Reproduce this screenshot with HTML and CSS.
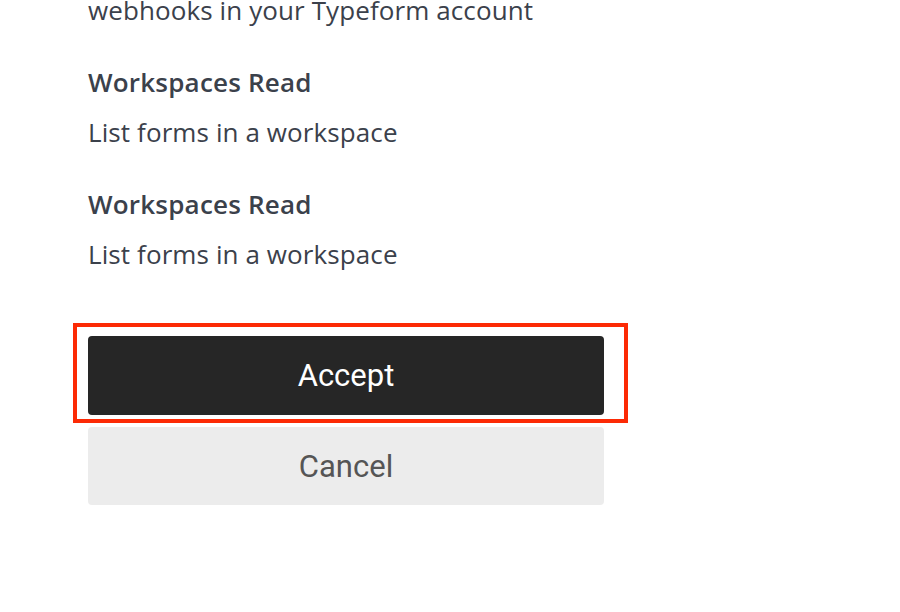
FILE: index.html
```html
<!DOCTYPE html>
<html lang="en">
<head>
<meta charset="utf-8">
<title>Authorize</title>
<link rel="stylesheet" href="styles.css">
</head>
<body>
  <main class="consent">
    <p class="scope-desc">webhooks in your Typeform account</p>
    <section class="scope">
      <h3 class="scope-title">Workspaces Read</h3>
      <p class="scope-desc">List forms in a workspace</p>
    </section>
    <section class="scope">
      <h3 class="scope-title">Workspaces Read</h3>
      <p class="scope-desc">List forms in a workspace</p>
    </section>
    <div class="actions">
      <div class="accept-wrap">
        <button class="btn btn-accept" type="button">Accept</button>
        <span class="highlight" aria-hidden="true"></span>
      </div>
      <button class="btn btn-cancel" type="button">Cancel</button>
    </div>
  </main>
</body>
</html>
```
FILE: styles.css
```css
html, body {
  margin: 0;
  padding: 0;
  background: #ffffff;
}

body {
  font-family: "Open Sans", "Noto Sans", sans-serif;
  color: #3b414b;
  overflow: hidden;
}

.consent {
  width: 516px;
  margin: -8px 0 0 88px;
  display: flex;
  flex-direction: column;
}

.scope {
  margin-top: 36px;
  display: flex;
  flex-direction: column;
  gap: 14px;
}

.scope-title {
  margin: 0;
  font-size: 26px;
  line-height: 36px;
  font-weight: 600;
  letter-spacing: 0.2px;
}

.scope-desc {
  margin: 0;
  font-size: 26px;
  line-height: 36px;
  font-weight: 400;
  letter-spacing: 0.1px;
}

.actions {
  margin-top: 64px;
  display: flex;
  flex-direction: column;
  gap: 12px;
}

.accept-wrap {
  position: relative;
}

.btn {
  display: block;
  width: 100%;
  border: none;
  border-radius: 4px;
  font-family: Roboto, "Liberation Sans", sans-serif;
  font-size: 31px;
  font-weight: 400;
  cursor: pointer;
  padding: 0;
}

.btn-accept {
  height: 79px;
  background: #262626;
  color: #ffffff;
}

.btn-cancel {
  height: 78px;
  background: #ececec;
  color: #555555;
}

.highlight {
  position: absolute;
  left: -15px;
  top: -13px;
  width: 547px;
  height: 92px;
  border: 4px solid #fc2a05;
  pointer-events: none;
}
```
